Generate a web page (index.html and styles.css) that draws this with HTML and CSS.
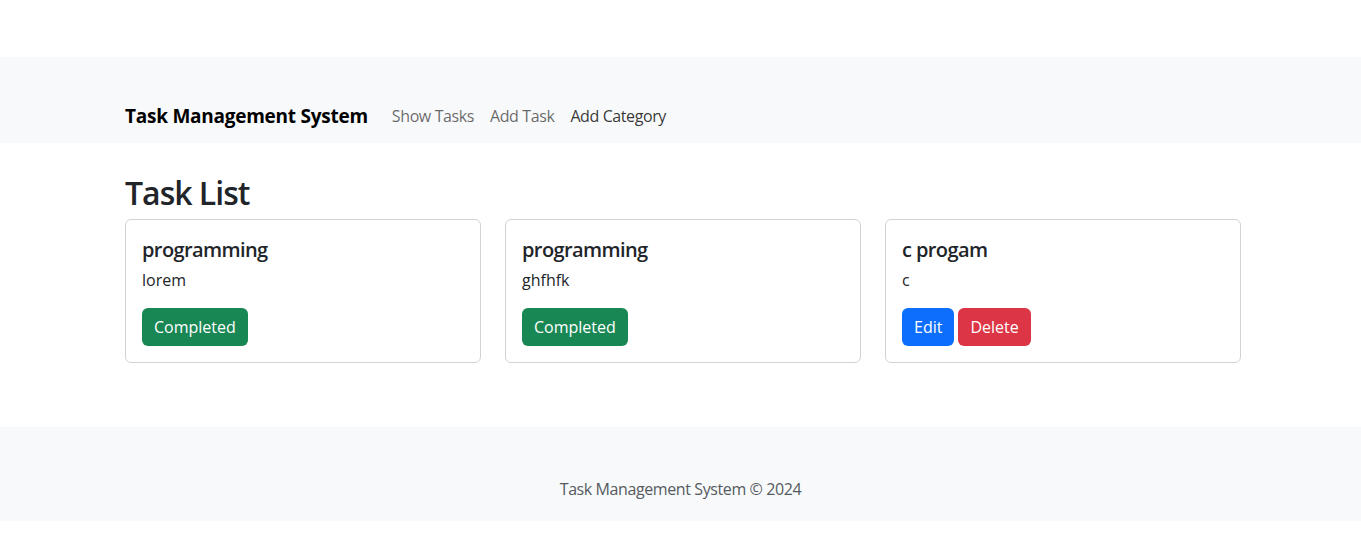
FILE: index.html
```html
<!DOCTYPE html>
<html lang="en">
<head>
<meta charset="utf-8">
<title>Task Management System</title>
<link rel="stylesheet" href="styles.css">
</head>
<body>
<nav class="navbar">
  <div class="container nav-inner">
    <a class="brand" href="#">Task Management System</a>
    <ul class="nav-links">
      <li><a class="nav-link" href="#">Show Tasks</a></li>
      <li><a class="nav-link" href="#">Add Task</a></li>
      <li><a class="nav-link active" href="#">Add Category</a></li>
    </ul>
  </div>
</nav>
<main class="container">
  <h2 class="page-title">Task List</h2>
  <div class="cards">
    <div class="card">
      <h5 class="card-title">programming</h5>
      <p class="card-text">lorem</p>
      <div class="actions"><a class="btn btn-success" href="#">Completed</a></div>
    </div>
    <div class="card">
      <h5 class="card-title">programming</h5>
      <p class="card-text">ghfhfk</p>
      <div class="actions"><a class="btn btn-success" href="#">Completed</a></div>
    </div>
    <div class="card">
      <h5 class="card-title">c progam</h5>
      <p class="card-text">c</p>
      <div class="actions"><a class="btn btn-primary" href="#">Edit</a><a class="btn btn-danger" href="#">Delete</a></div>
    </div>
  </div>
</main>
<footer class="footer">
  <p>Task Management System © 2024</p>
</footer>
</body>
</html>
```

FILE: styles.css
```css
* { box-sizing: border-box; }
body {
  margin: 0;
  padding-top: 57px;
  font-family: "Open Sans", "Noto Sans", sans-serif;
  font-size: 16px;
  line-height: 1.5;
  color: #212529;
  background: #fff;
}
.container {
  width: 1116px;
  margin: 0 0 0 125px;
}
.navbar {
  background: #f8f9fa;
  padding: 44px 0 12px;
}
.nav-inner {
  display: flex;
  align-items: center;
}
.brand {
  font-size: 19px;
  line-height: 30px;
  font-weight: 700;
  color: #000;
  text-decoration: none;
  margin-right: 16px;
  letter-spacing: -0.25px;
}
.nav-links {
  display: flex;
  list-style: none;
  margin: 0;
  padding: 0;
}
.nav-link {
  display: block;
  padding: 0 8px;
  font-size: 16px;
  line-height: 24px;
  color: rgba(0,0,0,0.6);
  text-decoration: none;
  letter-spacing: -0.4px;
}
.nav-link.active { color: rgba(0,0,0,0.8); }
.page-title {
  font-size: 32px;
  line-height: 38px;
  font-weight: 600;
  margin: 31px 0 7px;
  letter-spacing: -1px;
}
.cards {
  display: grid;
  grid-template-columns: repeat(3, 356px);
  gap: 24px;
}
.card {
  border: 1px solid #d3d3d3;
  border-radius: 6px;
  padding: 16px;
}
.card-title {
  font-size: 20px;
  line-height: 24px;
  font-weight: 600;
  margin: 2px 0 6px;
  letter-spacing: -0.6px;
}
.card-text {
  margin: 0 0 16px;
}
.actions {
  display: flex;
  gap: 4px;
}
.btn {
  display: inline-block;
  padding: 6px 12px;
  border-radius: 6px;
  font-size: 16px;
  line-height: 26px;
  color: #fff;
  text-decoration: none;
}
.btn-success { background: #198754; }
.btn-primary { background: #0d6efd; }
.btn-danger { background: #dc3545; }
.footer {
  margin-top: 64px;
  background: #f8f9fa;
  padding: 50px 0 20px;
  text-align: center;
}
.footer p {
  margin: 0;
  color: #555b61;
  letter-spacing: -0.4px;
}
```
